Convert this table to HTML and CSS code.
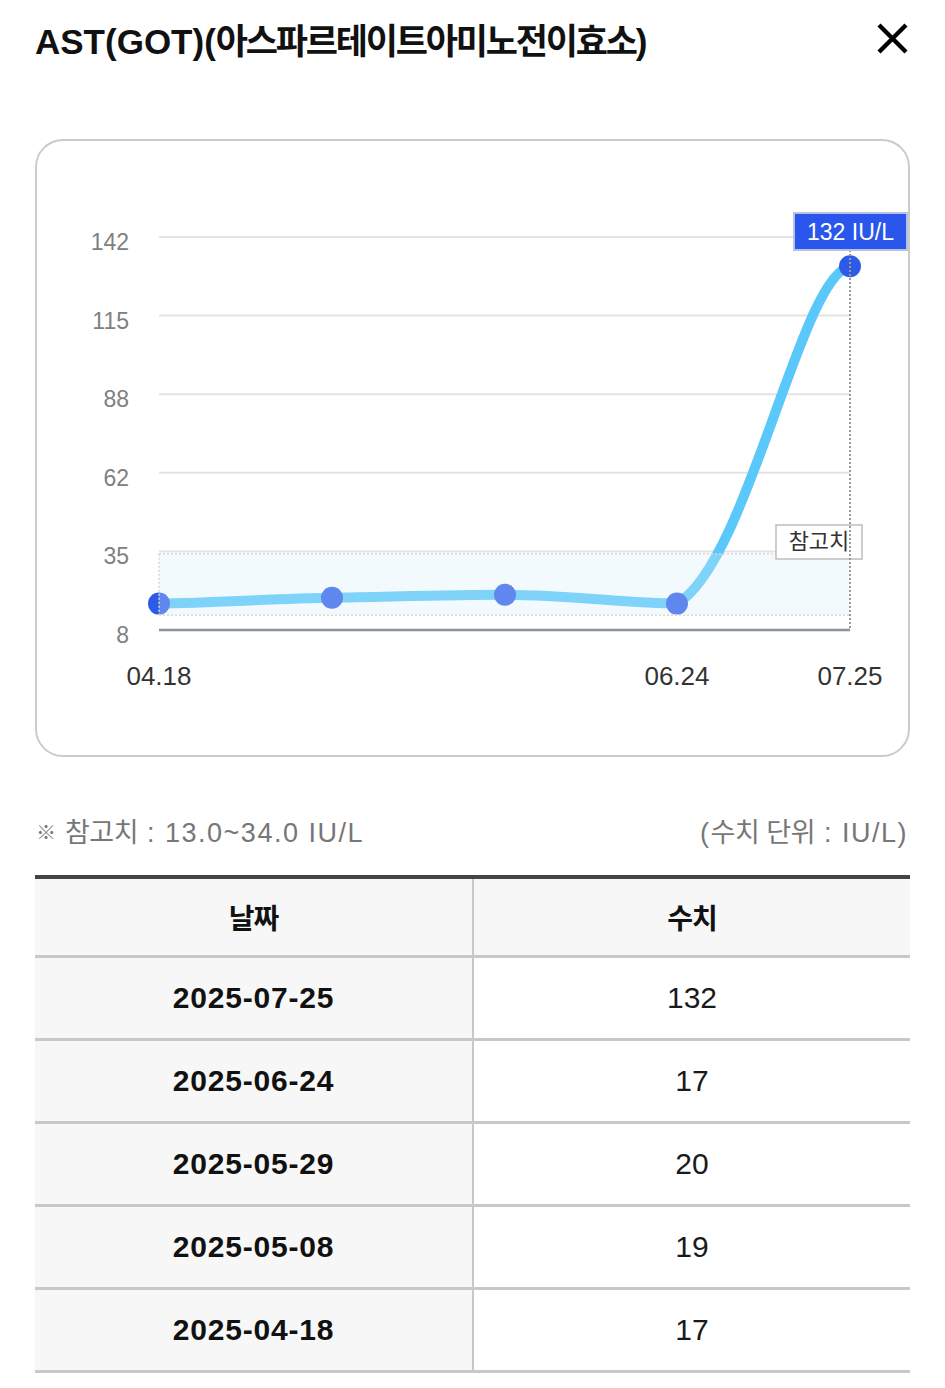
FILE: index.html
```html
<!DOCTYPE html>
<html lang="ko">
<head>
<meta charset="utf-8">
<title>AST(GOT)</title>
<link rel="stylesheet" href="styles.css">
</head>
<body>
<div class="page">
  <header class="top">
    <h1 class="title">AST(GOT)(<span class="ko">아스파르테이트아미노전이효소</span>)</h1>
    <button class="close" aria-label="닫기">
      <svg width="31" height="31" viewBox="0 0 31 31"><path d="M2 2 L29 29 M29 2 L2 29" stroke="#000" stroke-width="4.4" fill="none"/></svg>
    </button>
  </header>

  <section class="chart-card">
    <svg class="chart" viewBox="37 141 871 614" width="871" height="614">
      <g class="grid">
        <line x1="159" y1="237" x2="850" y2="237"/>
        <line x1="159" y1="315.6" x2="850" y2="315.6"/>
        <line x1="159" y1="394.2" x2="850" y2="394.2"/>
        <line x1="159" y1="472.8" x2="850" y2="472.8"/>
        <line x1="159" y1="551.4" x2="850" y2="551.4"/>
      </g>
      <line class="axis" x1="159" y1="630" x2="850" y2="630"/>
      <g class="ylab">
        <text x="129" y="250">142</text>
        <text x="129" y="328.6">115</text>
        <text x="129" y="407.2">88</text>
        <text x="129" y="485.8">62</text>
        <text x="129" y="564.4">35</text>
        <text x="129" y="643">8</text>
      </g>
      <g class="xlab">
        <text x="159" y="685">04.18</text>
        <text x="677" y="685">06.24</text>
        <text x="850" y="685">07.25</text>
      </g>
      <path class="series" d="M159 603.6 C217 602.6 275 598.6 332 597.7 C390 596.8 447 594.8 505 594.8 C565 594.8 630 603.6 677 603.6 C748 563 800 276 850 266.3"/>
      <g class="pts">
        <circle cx="159" cy="603.6" r="11"/>
        <circle cx="332" cy="597.7" r="11"/>
        <circle cx="505" cy="594.8" r="11"/>
        <circle cx="677" cy="603.6" r="11"/>
        <circle cx="850" cy="266.3" r="11"/>
      </g>
      <rect class="band" x="159" y="553.7" width="691" height="61.6"/>
      <g class="band-edge">
        <line x1="159" y1="553.7" x2="850" y2="553.7"/>
        <line x1="159" y1="615.3" x2="850" y2="615.3"/>
        <line x1="159" y1="553.7" x2="159" y2="615.3"/>
      </g>
      <rect class="ref-box" x="776" y="525" width="86" height="34"/>
      <text class="ref-label" x="819" y="549">참고치</text>
      <line class="cross" x1="850" y1="250" x2="850" y2="630"/>
      <rect class="tip-box" x="794" y="213" width="113" height="37"/>
      <text class="tip" x="850.5" y="239.5">132 IU/L</text>
    </svg>
  </section>

  <div class="note">
    <span><span class="mark">※</span> <span class="ko">참고치</span> : 13.0~34.0 IU/L</span>
    <span>(<span class="ko">수치 단위</span> : IU/L)</span>
  </div>

  <div class="table">
    <div class="cell head">날짜</div>
    <div class="cell head val">수치</div>

    <div class="cell date">2025-07-25</div>
    <div class="cell val">132</div>

    <div class="cell date">2025-06-24</div>
    <div class="cell val">17</div>

    <div class="cell date">2025-05-29</div>
    <div class="cell val">20</div>

    <div class="cell date">2025-05-08</div>
    <div class="cell val">19</div>

    <div class="cell date">2025-04-18</div>
    <div class="cell val">17</div>
  </div>
</div>
</body>
</html>
```

FILE: styles.css
```css
* { box-sizing: border-box; }

body {
  margin: 0;
  background: #fff;
  color: #111;
  font-family: "Liberation Sans", "Noto Sans CJK KR", sans-serif;
}

.top {
  display: flex;
  justify-content: space-between;
  align-items: flex-start;
  height: 66px;
  padding: 21px 37px 0 35px;
}

.title {
  margin: 0;
  font-size: 35px;
  line-height: 42px;
  font-weight: 700;
  color: #111;
}

.title .ko { letter-spacing: -2.2px; }

.close {
  display: block;
  width: 31px;
  height: 31px;
  margin-top: 2px;
  padding: 0;
  border: 0;
  background: none;
}

.close svg { display: block; }

.chart-card {
  height: 618px;
  margin: 73px 35px 0;
  border: 2px solid #cbcbcb;
  border-radius: 28px;
  overflow: hidden;
}

.chart { display: block; }

.grid line { stroke: #e3e3e3; stroke-width: 2; }
.axis { stroke: #89959b; stroke-width: 2.4; }

.ylab text { font-size: 23px; fill: #808080; text-anchor: end; }
.xlab text { font-size: 26px; fill: #333; text-anchor: middle; }

.series {
  fill: none;
  stroke: #5ac8fa;
  stroke-width: 10;
  stroke-linecap: round;
  stroke-linejoin: round;
}

.pts circle { fill: #2c5be8; }

.band { fill: rgb(215, 238, 248); fill-opacity: 0.3; }

.band-edge line {
  stroke: #d9d9d9;
  stroke-width: 1.5;
  stroke-dasharray: 2 2;
}

.ref-box { fill: #fff; stroke: #bdbdbd; stroke-width: 1.5; }
.ref-label { font-size: 22px; fill: #333; text-anchor: middle; }

.cross {
  stroke: #9a9a9a;
  stroke-width: 2;
  stroke-dasharray: 2 2;
}

.tip-box { fill: #2a56ec; stroke: #b6c2e6; stroke-width: 2; }
.tip { font-size: 23px; fill: #fff; text-anchor: middle; }

.note {
  display: flex;
  justify-content: space-between;
  margin: 58px 37px 0 36px;
  font-size: 27px;
  line-height: 36px;
  color: #777;
  letter-spacing: 1.5px;
}

.note .mark { font-size: 20px; letter-spacing: 0; vertical-align: 2px; }
.note .ko { letter-spacing: -0.5px; }

.table {
  display: grid;
  grid-template-columns: 437px 438px;
  margin: 24px 35px 0;
  border-top: 4px solid #444;
}

.cell {
  display: flex;
  align-items: center;
  justify-content: center;
  height: 83px;
  border-bottom: 3px solid #c8c8c8;
  font-size: 30px;
  color: #1a1a1a;
}

.cell.date {
  background: #f7f7f7;
  font-weight: 700;
  letter-spacing: 0.8px;
  color: #111;
}

.cell.val { border-left: 2px solid #c8c8c8; }

.cell.head {
  height: 79px;
  background: #f7f7f7;
  font-size: 28px;
  font-weight: 700;
  letter-spacing: -1px;
  color: #111;
}
```
